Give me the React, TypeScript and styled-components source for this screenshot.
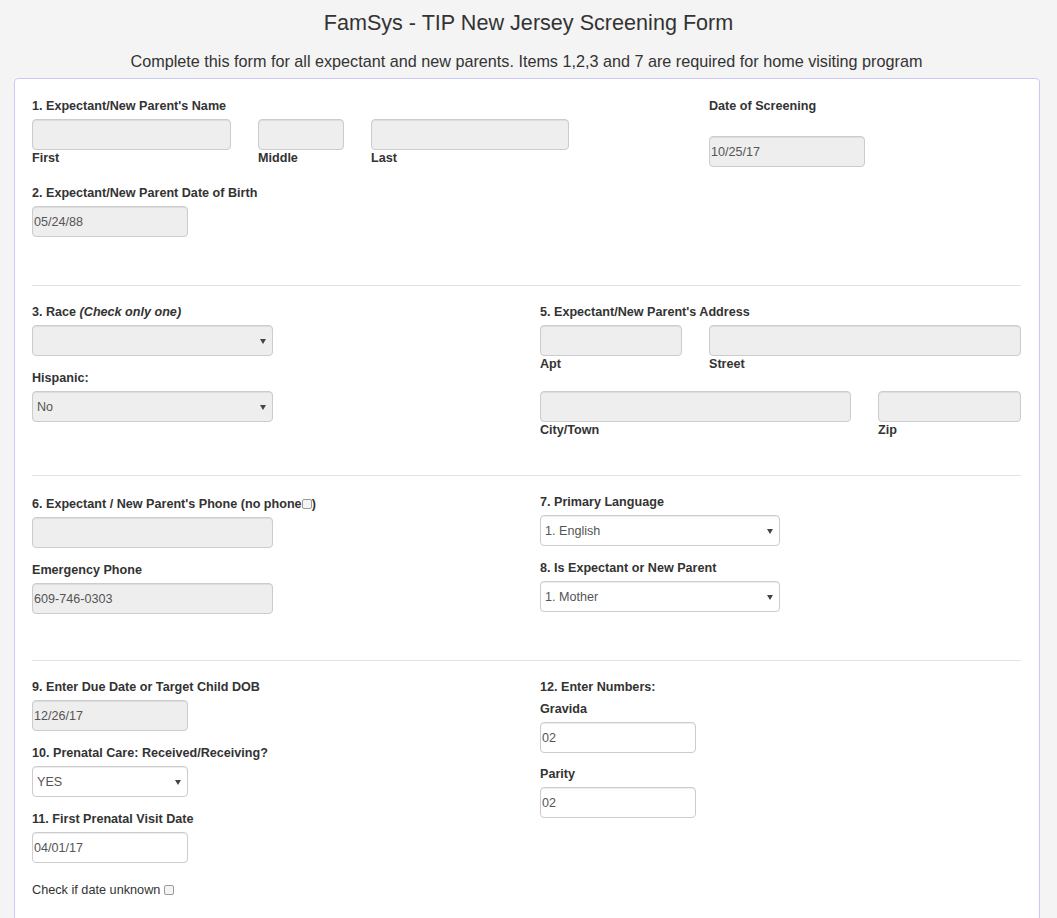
import React from "react";
import styled, { createGlobalStyle } from "styled-components";

const Global = createGlobalStyle`
  html, body { margin: 0; padding: 0; overflow: hidden; }
  body {
    background: #f4f4f4;
    font-family: "Liberation Sans", Arial, Helvetica, sans-serif;
    color: #333;
  }
  * { box-sizing: border-box; }
`;

const Page = styled.div`
  min-height: 918px;
`;

const Title = styled.h1`
  margin: 0;
  padding-top: 11px;
  font-size: 21.6px;
  line-height: 24px;
  font-weight: normal;
  text-align: center;
  color: #333;
`;

const Subtitle = styled.p`
  margin: 15px 4px 6px 0;
  font-size: 16.2px;
  line-height: 22px;
  text-align: center;
  color: #333;
`;

const Card = styled.div`
  margin: 0 17px 0 14px;
  background: #fff;
  border: 1px solid #c9c9f7;
  border-radius: 4px;
  padding: 17px 18px 60px 17px;
`;

const Section = styled.div<{ $pb: number }>`
  padding-bottom: ${(p) => p.$pb}px;
`;

const Divider = styled.hr`
  margin: 0 0 16px;
  border: 0;
  border-top: 1px solid #e2e2e2;
  height: 0;
`;

const TwoCol = styled.div`
  display: grid;
  grid-template-columns: 1fr 1fr;
  column-gap: 27px;
  align-items: start;
`;

const Column = styled.div`
  display: flex;
  flex-direction: column;
`;

const TopRow = styled.div`
  display: flex;
  align-items: flex-start;
  margin-bottom: 16px;
`;

const DateBlock = styled.div`
  margin-left: 140px;
  display: flex;
  flex-direction: column;
`;

const NameGrid = styled.div`
  display: grid;
  grid-template-columns: 199px 86px 198px;
  column-gap: 27px;
`;

const AddressGrid = styled.div<{ $cols: string; $mt?: number }>`
  display: grid;
  grid-template-columns: ${(p) => p.$cols};
  column-gap: 27px;
  margin-top: ${(p) => p.$mt ?? 0}px;
`;

const Cell = styled.div`
  display: flex;
  flex-direction: column;
`;

const Group = styled.div<{ $mb?: number }>`
  display: flex;
  flex-direction: column;
  margin-bottom: ${(p) => p.$mb ?? 12}px;
`;

const Label = styled.label<{ $mb?: number; $pt?: number }>`
  display: block;
  font-size: 12.6px;
  font-weight: bold;
  line-height: 18px;
  margin-bottom: ${(p) => p.$mb ?? 4}px;
  padding-top: ${(p) => p.$pt ?? 1}px;
  color: #333;
  white-space: nowrap;
`;

const SubLabel = styled.span`
  display: block;
  font-size: 12.6px;
  font-weight: bold;
  line-height: 16px;
  color: #333;
`;

const Input = styled.div<{ $w?: number; $ro?: boolean; $mt?: number }>`
  width: ${(p) => (p.$w ? `${p.$w}px` : "100%")};
  height: 31px;
  margin-top: ${(p) => p.$mt ?? 0}px;
  border: 1px solid #ccc;
  border-radius: 4px;
  background: ${(p) => (p.$ro ? "#eee" : "#fff")};
  box-shadow: inset 0 1px 1px rgba(0, 0, 0, 0.075);
  font-size: 12.6px;
  line-height: 28px;
  color: #555;
  padding: 1px 1px 0;
  white-space: nowrap;
`;

const Select = styled.div<{ $w: number; $ro?: boolean }>`
  position: relative;
  width: ${(p) => p.$w}px;
  height: 31px;
  border: 1px solid #ccc;
  border-radius: 4px;
  background: ${(p) => (p.$ro ? "#eee" : "#fff")};
  box-shadow: inset 0 1px 1px rgba(0, 0, 0, 0.075);
  font-size: 12.6px;
  line-height: 28px;
  color: #555;
  padding: 1px 4px 0;
  &::after {
    content: "";
    position: absolute;
    right: 6px;
    top: 13px;
    border-left: 3.5px solid transparent;
    border-right: 3.5px solid transparent;
    border-top: 5px solid #444;
  }
`;

const Check = styled.span<{ $ml?: number }>`
  display: inline-block;
  width: 10px;
  height: 10px;
  border: 1px solid #9a9a9a;
  border-radius: 2px;
  background: #f4f4f4;
  margin-left: ${(p) => p.$ml ?? 0}px;
  vertical-align: -1px;
`;

const Note = styled.div`
  margin-top: 18px;
  font-size: 12.7px;
  line-height: 18px;
  color: #333;
`;

export default function App() {
  return (
    <Page>
      <Global />
      <Title>FamSys - TIP New Jersey Screening Form</Title>
      <Subtitle>
        Complete this form for all expectant and new parents. Items 1,2,3 and 7 are required for home visiting program
      </Subtitle>
      <Card>
        <Section $pb={48}>
          <TopRow>
            <div>
              <Label>1. Expectant/New Parent's Name</Label>
              <NameGrid>
                <Cell>
                  <Input $ro />
                  <SubLabel>First</SubLabel>
                </Cell>
                <Cell>
                  <Input $ro />
                  <SubLabel>Middle</SubLabel>
                </Cell>
                <Cell>
                  <Input $ro />
                  <SubLabel>Last</SubLabel>
                </Cell>
              </NameGrid>
            </div>
            <DateBlock>
              <Label>Date of Screening</Label>
              <Input $w={156} $ro $mt={17}>10/25/17</Input>
            </DateBlock>
          </TopRow>
          <Label>2. Expectant/New Parent Date of Birth</Label>
          <Input $w={156} $ro>05/24/88</Input>
        </Section>
        <Divider />
        <Section $pb={37}>
          <TwoCol>
            <Column>
              <Group>
                <Label>
                  3. Race <i>(Check only one)</i>
                </Label>
                <Select $w={241} $ro />
              </Group>
              <Group $mb={0}>
                <Label>Hispanic:</Label>
                <Select $w={241} $ro>No</Select>
              </Group>
            </Column>
            <Column>
              <Label>5. Expectant/New Parent's Address</Label>
              <AddressGrid $cols="142px 1fr">
                <Cell>
                  <Input $ro />
                  <SubLabel>Apt</SubLabel>
                </Cell>
                <Cell>
                  <Input $ro />
                  <SubLabel>Street</SubLabel>
                </Cell>
              </AddressGrid>
              <AddressGrid $cols="1fr 143px" $mt={19}>
                <Cell>
                  <Input $ro />
                  <SubLabel>City/Town</SubLabel>
                </Cell>
                <Cell>
                  <Input $ro />
                  <SubLabel>Zip</SubLabel>
                </Cell>
              </AddressGrid>
            </Column>
          </TwoCol>
        </Section>
        <Divider />
        <Section $pb={46}>
          <TwoCol>
            <Column>
              <Group>
                <Label $pt={3} $mb={4}>
                  6. Expectant / New Parent's Phone (no phone<Check />)
                </Label>
                <Input $w={241} $ro />
              </Group>
              <Group $mb={0}>
                <Label>Emergency Phone</Label>
                <Input $w={241} $ro>609-746-0303</Input>
              </Group>
            </Column>
            <Column>
              <Group>
                <Label>7. Primary Language</Label>
                <Select $w={240}>1. English</Select>
              </Group>
              <Group $mb={0}>
                <Label>8. Is Expectant or New Parent</Label>
                <Select $w={240}>1. Mother</Select>
              </Group>
            </Column>
          </TwoCol>
        </Section>
        <Divider />
        <Section $pb={0}>
          <TwoCol>
            <Column>
              <Group>
                <Label>9. Enter Due Date or Target Child DOB</Label>
                <Input $w={156} $ro>12/26/17</Input>
              </Group>
              <Group>
                <Label>10. Prenatal Care: Received/Receiving?</Label>
                <Select $w={156}>YES</Select>
              </Group>
              <Group $mb={0}>
                <Label>11. First Prenatal Visit Date</Label>
                <Input $w={156}>04/01/17</Input>
              </Group>
              <Note>
                Check if date unknown
                <Check $ml={4} />
              </Note>
            </Column>
            <Column>
              <Label $mb={3}>12. Enter Numbers:</Label>
              <Group $mb={11}>
                <Label>Gravida</Label>
                <Input $w={156}>02</Input>
              </Group>
              <Group $mb={0}>
                <Label>Parity</Label>
                <Input $w={156}>02</Input>
              </Group>
            </Column>
          </TwoCol>
        </Section>
      </Card>
    </Page>
  );
}
